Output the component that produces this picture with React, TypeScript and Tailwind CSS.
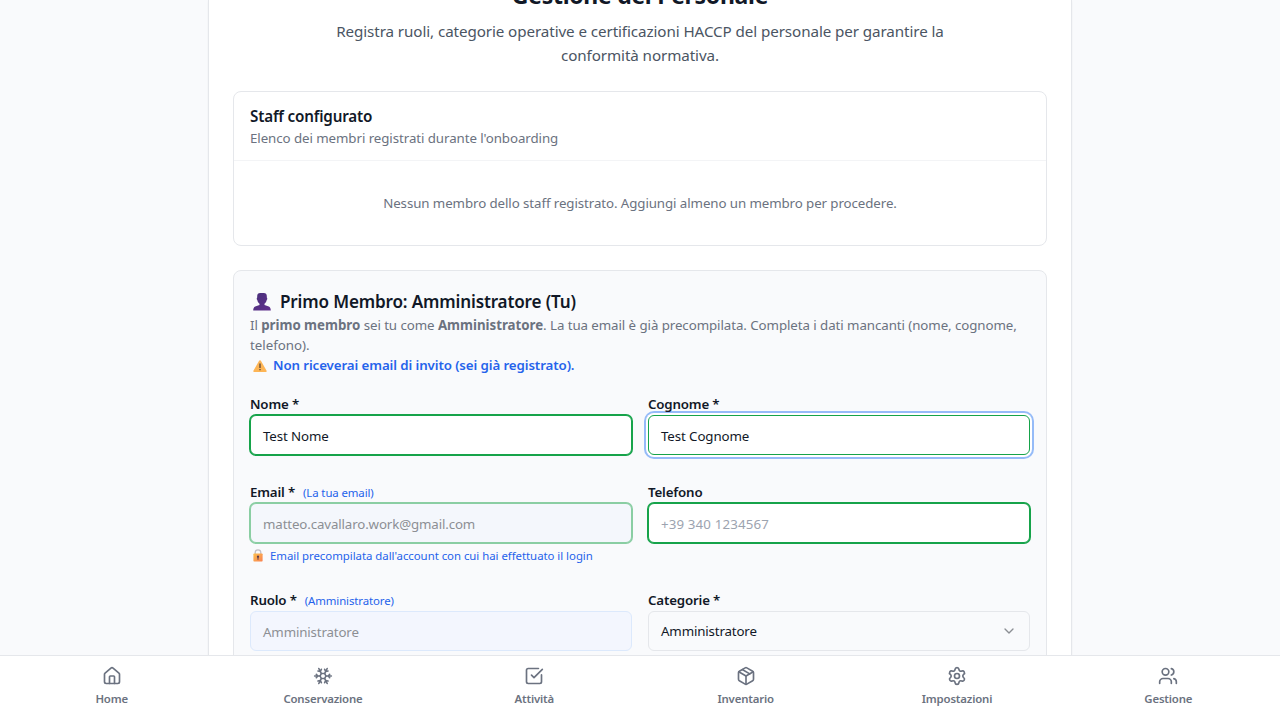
import React, { type ReactNode } from 'react'
import { ChevronDown, House, Package, Settings, Snowflake, SquareCheckBig, Users } from 'lucide-react'

function PersonGlyph() {
  return (
    <svg viewBox="0 0 18 18" className="h-[18px] w-[18px] shrink-0">
      <defs>
        <linearGradient id="bust" x1="0" y1="0" x2="1" y2="1">
          <stop offset="0" stopColor="#463079" />
          <stop offset="1" stopColor="#64308f" />
        </linearGradient>
      </defs>
      <path
        d="M7.200 0h3.600c1.900 0 3 1.100 3 3v1.600c.7.300.6 2-.1 2.300-.3 1.700-1.100 3-2.200 3.800v1.300l4.300 1.500c1.300.5 1.900 1.900 2 4.100H.2c.1-2.200.7-3.600 2-4.100L6.500 12v-1.300C5.400 9.900 4.600 8.600 4.300 6.900c-.7-.3-.8-2-.1-2.300V3c0-1.900 1.100-3 3-3Z"
        fill="url(#bust)"
      />
    </svg>
  )
}

function WarningGlyph() {
  return (
    <svg viewBox="0 0 14 12" className="relative top-px h-3 w-3.5 shrink-0">
      <path d="M6.100.7a1 1 0 0 1 1.800 0l5.700 10c.4.700 0 1.300-.8 1.300H1.200c-.8 0-1.200-.6-.8-1.300Z" fill="#fdb556" />
      <path d="M6.400 3.600h1.200v4.500H6.400zM6.400 9h1.200v1.300H6.400z" fill="#4b3b37" />
    </svg>
  )
}

function LockGlyph() {
  return (
    <svg viewBox="0 0 10 13" className="h-[13px] w-2.5 shrink-0">
      <defs>
        <linearGradient id="brass" x1="0" y1="0" x2="1" y2="1">
          <stop offset="0" stopColor="#fcc04e" />
          <stop offset="1" stopColor="#f98050" />
        </linearGradient>
      </defs>
      <path d="M2.200 6V3.600a2.800 2.800 0 0 1 5.600 0V6" fill="none" stroke="#c3bec4" strokeWidth="1.300" />
      <rect x="0.400" y="4.600" width="9.200" height="7.900" rx="0.700" fill="url(#brass)" />
      <path d="M5 6.600a1.100 1.100 0 0 1 .5 2.100v2h-1v-2A1.100 1.100 0 0 1 5 6.600Z" fill="#5b3b4b" />
    </svg>
  )
}

type FieldProps = { label: ReactNode; note?: ReactNode; help?: ReactNode; children: ReactNode }

function Field({ label, note, help, children }: FieldProps) {
  return (
    <div>
      <div className="flex h-6 items-center gap-2 whitespace-nowrap pt-1">
        <span className="text-[13.3px] font-semibold tracking-[-0.17px]">{label}</span>
        {note}
      </div>
      {children}
      {help}
    </div>
  )
}

const tabs = [
  { name: 'Home', Icon: House },
  { name: 'Conservazione', Icon: Snowflake },
  { name: 'Attività', Icon: SquareCheckBig },
  { name: 'Inventario', Icon: Package },
  { name: 'Impostazioni', Icon: Settings },
  { name: 'Gestione', Icon: Users },
]

export default function App() {
  return (
    <div className="flex h-[720px] flex-col overflow-hidden bg-[#f9fafc] font-['Noto_Sans','Open_Sans',sans-serif] text-[#111827]">
      <main className="flex min-h-0 flex-1 justify-center overflow-hidden">
        <div className="h-[800px] w-[864px] border-x border-[#e5e7eb] bg-white px-6 shadow-xs">
          <header className="-mt-[21px] text-center whitespace-nowrap">
            <h2 className="mb-2 text-[23px] leading-8 font-bold tracking-[-0.28px]">Gestione del Personale</h2>
            <p className="text-[15.2px] leading-6 tracking-[-0.09px] text-[#4b5563]">
              Registra ruoli, categorie operative e certificazioni HACCP del personale per garantire la
              <br />
              conformità normativa.
            </p>
          </header>

          <section className="mt-6 rounded-lg border border-[#e5e7eb]">
            <div className="border-b border-[#f3f4f6] px-4 py-3 whitespace-nowrap">
              <h3 className="text-[15.2px] leading-6 font-semibold tracking-[-0.17px]">Staff configurato</h3>
              <p className="text-[13.3px] leading-5 tracking-[-0.07px] text-[#6b7280]">
                Elenco dei membri registrati durante l'onboarding
              </p>
            </div>
            <p className="py-8 text-center text-[13.3px] leading-5 tracking-[-0.085px] text-[#6b7280]">
              Nessun membro dello staff registrato. Aggiungi almeno un membro per procedere.
            </p>
          </section>

          <section className="mt-6 h-[460px] rounded-lg border border-[#e5e7eb] bg-[#f9fafc] p-4">
            <h3 className="flex h-7 items-center gap-[9px] pt-px pl-[3px] text-[17.1px] font-semibold tracking-[-0.16px] whitespace-nowrap">
              <PersonGlyph />
              <span>Primo Membro: Amministratore (Tu)</span>
            </h3>
            <div className="text-[13.3px] leading-5 whitespace-nowrap text-[#6b7280]">
              <p className="tracking-[-0.07px]">
                Il <strong className="tracking-[-0.02px]">primo membro</strong> sei tu come{' '}
                <strong className="tracking-[-0.02px]">Amministratore</strong>. La tua email è già
                precompilata. Completa i dati mancanti (nome, cognome,
              </p>
              <p>telefono).</p>
              <p className="flex items-center gap-1.5 pl-[3px] font-semibold tracking-[-0.1px] text-[#2563eb]">
                <WarningGlyph />
                <span>Non riceverai email di invito (sei già registrato).</span>
              </p>
            </div>

            <form className="mt-4 grid grid-cols-2 gap-x-4 gap-y-6 text-[13.3px] tracking-[-0.1px]">
              <Field label="Nome *">
                <div className="flex h-10 items-center rounded-md border border-[#16a34a] bg-white px-3 pt-1 ring-1 ring-[#16a34a]">
                  Test Nome
                </div>
              </Field>
              <Field label="Cognome *">
                <div className="flex h-10 items-center rounded-md border border-[#16a34a] bg-white px-3 pt-1 ring-2 ring-[#95bbf8] ring-offset-2">
                  Test Cognome
                </div>
              </Field>
              <Field
                label="Email *"
                note={<span className="text-[11.4px] text-[#2563eb]">(La tua email)</span>}
                help={
                  <p className="mt-1 flex h-4 items-center gap-[7px] pl-[3px] text-[11.4px] leading-4 tracking-[-0.03px] whitespace-nowrap text-[#2563eb]">
                    <LockGlyph />
                    <span className="pt-px">Email precompilata dall'account con cui hai effettuato il login</span>
                  </p>
                }
              >
                <div className="flex h-10 items-center rounded-md border border-[#8acea3] bg-[#f4f7fc] px-3 pt-1 tracking-[-0.13px] text-[#8c8f94] ring-1 ring-[#8acea3]">
                  matteo.cavallaro.work@gmail.com
                </div>
              </Field>
              <Field label="Telefono">
                <div className="flex h-10 items-center rounded-md border border-[#16a34a] bg-white px-3 pt-1 tracking-[0.14px] text-[#9ca3af] ring-1 ring-[#16a34a]">
                  +39 340 1234567
                </div>
              </Field>
              <Field label="Ruolo *" note={<span className="text-[11.4px] text-[#2563eb]">(Amministratore)</span>}>
                <div className="flex h-10 items-center rounded-md border border-[#dce9fc] bg-[#f3f6fe] px-3 pt-1 tracking-[-0.15px] text-[#8c8f94]">
                  Amministratore
                </div>
              </Field>
              <Field label="Categorie *">
                <div className="flex h-10 items-center justify-between rounded-md border border-[#e5e7eb] px-3 tracking-[-0.15px]">
                  <span className="pt-px">Amministratore</span>
                  <ChevronDown className="h-4 w-4 text-[#8b8e94]" />
                </div>
              </Field>
            </form>
          </section>
        </div>
      </main>

      <nav className="grid h-[65px] shrink-0 grid-cols-6 border-t border-[#e5e7eb] bg-white px-1.5">
        {tabs.map(({ name, Icon }) => (
          <a
            key={name}
            className="flex flex-col items-center gap-[5px] pt-2.5 text-[11.4px] leading-4 font-semibold tracking-[-0.17px] text-[#6b7280]"
          >
            <Icon className="h-5 w-5" />
            <span>{name}</span>
          </a>
        ))}
      </nav>
    </div>
  )
}
